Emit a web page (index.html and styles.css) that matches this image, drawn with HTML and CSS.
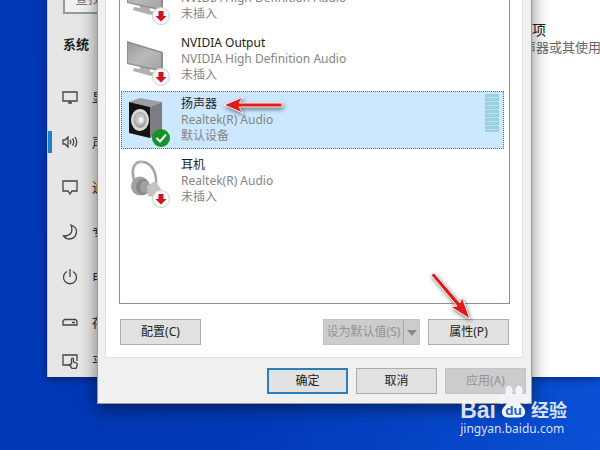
FILE: index.html
```
<!DOCTYPE html>
<html lang="zh-CN">
<head>
  <meta charset="UTF-8">
  <meta name="viewport" content="width=device-width, initial-scale=1.0">
  <title>声音</title>
  <link rel="stylesheet" href="styles.css">
</head>
<body>
  <!-- shared icons -->
  <svg class="defs" width="0" height="0" aria-hidden="true">
    <defs>
      <linearGradient id="screen" x1="0" y1="0" x2="1" y2="1">
        <stop offset="0" stop-color="#9a9a9a"/>
        <stop offset="0.5" stop-color="#b9b9b9"/>
        <stop offset="1" stop-color="#a2a2a2"/>
      </linearGradient>
      <g id="unplugged">
        <circle cx="34" cy="46" r="8.5" fill="#fafafa" stroke="#cfcfcf"/>
        <path d="M31.5 41h5v5h3L34 51.500l-5.500-5.500h3z" fill="#cf1420"/>
      </g>
      <g id="monitor">
        <path d="M13 34l10 3v4l8 1-7 3-18-5 1-3 6 1z" fill="#b0b0b0"/>
        <path d="M0 10l36 11v20L0 33z" fill="#8d8d8d"/>
        <path d="M1 12l33 10v17L1 32z" fill="url(#screen)"/>
      </g>
    </defs>
  </svg>

  <div class="desktop">
    <div class="settings">
      <nav class="sidebar">
        <input type="text" class="search" placeholder="查找设置" aria-label="查找设置">
        <h2>系统</h2>
        <a href="#display">
          <svg viewBox="0 0 16 16"><path d="M1 3h14v9H1zM6 14h4M8 12v2"/></svg>
          显示
        </a>
        <a href="#sound" class="current">
          <svg viewBox="0 0 16 16"><path d="M1 6h2l3-3v10l-3-3H1zM8 6q1.500 2 0 4M10.500 4.500q2.500 3.500 0 7M13 3q3.500 5 0 10"/></svg>
          声音
        </a>
        <a href="#notifications">
          <svg viewBox="0 0 16 16"><path d="M1 2h14v10h-5l-2 3-2-3H1z"/></svg>
          通知和操作
        </a>
        <a href="#focus">
          <svg viewBox="0 0 16 16"><path d="M9 1q6 2 5.500 7.500Q13 15 7.500 15 4 15 1.500 12 8 12 9.500 8 10.500 4.500 9 1z"/></svg>
          专注助手
        </a>
        <a href="#power">
          <svg viewBox="0 0 16 16"><path d="M5 2.500a6.500 6.500 0 1 0 6 0M8 0v8"/></svg>
          电源和睡眠
        </a>
        <a href="#storage">
          <svg viewBox="0 0 16 16"><path d="M2.500 5.500h11L15 7v4H1V7zM10 8.500h3"/></svg>
          存储
        </a>
        <a href="#tablet">
          <svg viewBox="0 0 16 16"><path d="M7 12H1V2h14v6M9.500 11V6q1-1.500 2 0v3l3 1q1 1 .500 3l-1 2.500h-4L7.500 12q0-1.500 2 0"/></svg>
          平板模式
        </a>
      </nav>
      <main class="page">
        <h3>应用音量和设备首选项</h3>
        <p>自定义应用音量和扬声器或其使用的设备。</p>
      </main>
    </div>

    <div class="dialog" role="dialog" aria-label="声音">
      <div class="panel">
        <ul class="devices">
          <li>
            <svg viewBox="0 0 46 56"><use href="#monitor"/><use href="#unplugged"/></svg>
            <div class="info">
              <strong>NVIDIA Output</strong>
              <span>NVIDIA High Definition Audio</span>
              <span>未插入</span>
            </div>
          </li>
          <li>
            <svg viewBox="0 0 46 56"><use href="#monitor"/><use href="#unplugged"/></svg>
            <div class="info">
              <strong>NVIDIA Output</strong>
              <span>NVIDIA High Definition Audio</span>
              <span>未插入</span>
            </div>
          </li>
          <li class="selected">
            <svg viewBox="0 0 46 56">
              <path d="M2 10l11-4 22 4-12 5z" fill="#9b9da3"/>
              <path d="M23 15l12-5v31l-12 5z" fill="#7c7d83"/>
              <path d="M2 10l21 5v31L2 41z" fill="#141414"/>
              <ellipse cx="13" cy="28" rx="9" ry="11" fill="#d9d9d6"/>
              <ellipse cx="13" cy="28" rx="6.500" ry="8" fill="#a3a4a4"/>
              <ellipse cx="13" cy="27" rx="5" ry="6" fill="#c3c4c2"/>
              <ellipse cx="14" cy="28" rx="2.500" ry="3" fill="#eeeeec"/>
              <circle cx="34" cy="46" r="9" fill="#159324"/>
              <path d="M29.500 46l3.500 3.500 6-7" fill="none" stroke="#fff" stroke-width="2"/>
            </svg>
            <div class="info">
              <strong>扬声器</strong>
              <span>Realtek(R) Audio</span>
              <span>默认设备</span>
            </div>
            <div class="level"></div>
          </li>
          <li>
            <svg viewBox="0 0 46 56">
              <path d="M7 27C3 14 9 8 16 9c9 1 14 11 13 23" fill="none" stroke="#a3a3a3" stroke-width="2.5"/>
              <path d="M8 25C5 14 10 9 16 9" fill="none" stroke="#cfcfcf"/>
              <ellipse cx="13" cy="33" rx="9" ry="9.500" fill="#a3a3a3"/>
              <ellipse cx="16" cy="34" rx="7" ry="8" fill="#888"/>
              <ellipse cx="18" cy="34" rx="5" ry="6" fill="#a0a0a0"/>
              <path d="M20 33l8-5 6 8-3 9-10-2z" fill="#c3c3c3"/>
              <use href="#unplugged"/>
            </svg>
            <div class="info">
              <strong>耳机</strong>
              <span>Realtek(R) Audio</span>
              <span>未插入</span>
            </div>
          </li>
        </ul>
        <div class="actions">
          <button type="button" class="configure">配置(C)</button>
          <div class="split">
            <button type="button" disabled>设为默认值(S)</button>
            <button type="button" class="more" aria-label="更多" disabled><svg viewBox="0 0 10 6"><path d="M0 0h10L5 6z"/></svg></button>
          </div>
          <button type="button">属性(P)</button>
        </div>
      </div>
      <div class="footer">
        <button type="button" class="default">确定</button>
        <button type="button">取消</button>
        <button type="button" disabled>应用(A)</button>
      </div>

      <svg class="arrow arrow-device" viewBox="0 0 66 20">
        <path d="M3 10L22 2l-4 6h43v4H18l4 6z"/>
      </svg>
      <svg class="arrow arrow-button" viewBox="0 0 46 54">
        <path d="M41 49L22 37l6-1L2 5l3-2 26 30 2-6z"/>
      </svg>
    </div>

    <div class="watermark">
      <div class="brand">
        <span class="bai">Bai</span>
        <svg viewBox="0 0 34 36">
          <ellipse cx="4" cy="15" rx="4" ry="5"/>
          <ellipse cx="12" cy="6" rx="4" ry="6"/>
          <ellipse cx="23" cy="6" rx="4" ry="6"/>
          <ellipse cx="30" cy="15" rx="4" ry="5"/>
          <path d="M17 14c5 0 6 5 10 9 5 5 3 12-4 12H11c-7 0-9-7-4-12 4-4 5-9 10-9z"/>
          <text x="17" y="32" text-anchor="middle">du</text>
        </svg>
        <span class="jingyan">经验</span>
      </div>
      <div class="url">jingyan.baidu.com</div>
    </div>
  </div>
</body>
</html>
```
FILE: styles.css
```
* {
  box-sizing: border-box;
}

body {
  margin: 0;
  font-family: "Noto Sans", "Noto Sans CJK SC", sans-serif;
  font-size: 12px;
  line-height: 16px;
  color: #222;
}

.defs {
  position: absolute;
}

.desktop {
  position: relative;
  height: 100vh;
  overflow: hidden;
  background: linear-gradient(100deg, #0037b3 0%, #0038b6 45%, #0a50d4 100%);
}

/* settings window */
.settings {
  position: absolute;
  top: -18px;
  left: 47px;
  right: 0;
  display: grid;
  grid-template-columns: 320px 1fr;
  background: #fff;
  border-left: 1px solid #b9c4de;
  box-shadow: 0 2px 8px rgba(0, 0, 0, 0.4);
}

.sidebar {
  background: #e6e6e6;
}

.search {
  display: block;
  width: 280px;
  height: 32px;
  margin-left: 15px;
  padding: 0 10px;
  border: 2px solid #999;
  background: #f2f2f2;
  font: inherit;
  font-size: 13px;
}

.sidebar h2 {
  margin: 22px 15px;
  font-size: 13px;
  line-height: 16px;
}

.sidebar a {
  display: flex;
  align-items: center;
  gap: 14px;
  height: 45px;
  padding-left: 14px;
  color: #222;
  font-size: 13px;
  text-decoration: none;
}

.sidebar a:last-child {
  height: 33px;
}

.sidebar a.current {
  background: linear-gradient(#1a80cc, #1a80cc) left center / 4px 22px no-repeat;
}

.sidebar svg {
  width: 16px;
  height: 16px;
  fill: none;
  stroke: #444;
  stroke-width: 1.3;
}

.page {
  padding: 40px 0 0 38px;
  white-space: nowrap;
}

.page h3 {
  margin: 0;
  font-size: 14px;
  font-weight: 400;
  line-height: 16px;
}

.page p {
  margin: 0;
  font-size: 13px;
  line-height: 18px;
  color: #666;
}

/* sound dialog */
.dialog {
  position: absolute;
  top: -47px;
  left: 97px;
  right: 68px;
  background: #f0f0f0;
  border: 1px solid #999;
  box-shadow: 0 4px 16px rgba(0, 0, 0, 0.5);
}

.panel {
  margin: 0 8px 0 7px;
  padding: 13px 12px 12px 13px;
  background: #fff;
  border: 1px solid #e2e2e2;
}

.devices {
  display: flex;
  flex-direction: column;
  gap: 3px;
  min-height: 336px;
  margin: 0 0 15px;
  padding: 0 5px 0 1px;
  border: 1px solid #8c9097;
  list-style: none;
}

.devices li {
  display: flex;
  gap: 8px;
  height: 58px;
  padding: 0 4px 0 5px;
  border: 1px dotted transparent;
}

.devices li.selected {
  background: #cce8ff;
  border-color: #667;
}

.devices svg {
  width: 46px;
  height: 56px;
}

.info {
  flex: 1;
  padding-top: 4px;
}

.info strong,
.info span {
  display: block;
  font-weight: 400;
}

.info span {
  color: #858585;
}

.level {
  width: 14px;
  height: 38px;
  margin-top: 2px;
  background: repeating-linear-gradient(#9bd0e3 0 3px, #b9e0f0 3px 4px);
}

button {
  width: 81px;
  height: 26px;
  padding: 0;
  border: 1px solid #adadad;
  background: #e1e1e1;
  color: #222;
  font: inherit;
}

button:disabled {
  border-color: #c4c4c4;
  background: #cccccc;
  color: #939393;
}

.actions {
  display: flex;
  gap: 8px;
  padding: 0 1px;
}

.configure {
  margin-right: auto;
}

.split {
  display: flex;
}

.split button {
  border-right-color: #aaa;
}

.split .more {
  width: 16px;
  border-left: 0;
  border-right-color: #c4c4c4;
}

.more svg {
  width: 10px;
  height: 6px;
  fill: #888;
}

.footer {
  display: flex;
  justify-content: flex-end;
  gap: 8px;
  padding: 10px 5px 9px;
}

.footer .default {
  border: 2px solid #2c7fbd;
}

/* pointer arrows */
.arrow {
  position: absolute;
  fill: #e01b1b;
  stroke: #fff0ee;
  stroke-width: 1;
  filter: drop-shadow(1px 2px 2px rgba(0, 0, 0, 0.5));
}

.arrow-device {
  top: 141px;
  left: 123px;
  width: 66px;
  height: 20px;
}

.arrow-button {
  top: 316px;
  left: 331px;
  width: 46px;
  height: 54px;
}

/* watermark */
.watermark {
  position: absolute;
  right: 33px;
  bottom: 12px;
  color: rgba(255, 255, 255, 0.85);
}

.brand {
  display: flex;
  align-items: flex-end;
  gap: 2px;
  font-weight: 700;
  line-height: 20px;
}

.bai {
  font-family: "Liberation Sans", sans-serif;
  font-size: 23px;
}

.brand svg {
  width: 31px;
  height: 36px;
  fill: #f0f4fc;
}

.brand text {
  font-family: "Liberation Sans", sans-serif;
  font-size: 15px;
  fill: #2862cf;
}

.jingyan {
  font-size: 18px;
}

.url {
  font-size: 12px;
  line-height: 18px;
}
```
